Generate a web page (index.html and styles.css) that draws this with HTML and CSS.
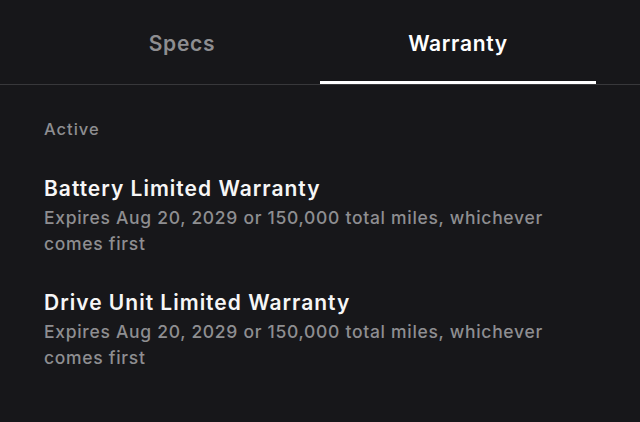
FILE: index.html
```html
<!DOCTYPE html>
<html>
<head>
    <title>Warranty</title>
    <link rel="stylesheet" href="styles.css">
</head>
<body>
    <nav class="tabs">
        <div class="tab">Specs</div>
        <div class="tab active">Warranty</div>
    </nav>
    <div class="content">
        <div class="section-label">Active</div>
        <div class="warranty">
            <h3>Battery Limited Warranty</h3>
            <p>Expires Aug 20, 2029 or 150,000 total miles, whichever comes first</p>
        </div>
        <div class="warranty">
            <h3>Drive Unit Limited Warranty</h3>
            <p>Expires Aug 20, 2029 or 150,000 total miles, whichever comes first</p>
        </div>
    </div>
</body>
</html>
```

FILE: styles.css
```css
/* Aba de garantia, tema escuro */
body {
    margin: 0;
    background-color: #17171a;
    font-family: Inter, 'Noto Sans', sans-serif;
    color: #fff;
}

.tabs {
    display: flex;
    padding: 0 44px;
    border-bottom: 1px solid #38383b;
}

.tab {
    flex: 1;
    text-align: center;
    font-size: 21px;
    font-weight: 600;
    letter-spacing: 0.7px;
    color: #8e8e91;
    height: 84px;
    line-height: 88px;
    box-sizing: border-box;
}

.tab.active {
    color: #fff;
    border-bottom: 3px solid #fff;
}

.content {
    padding: 0 44px;
}

.section-label {
    font-size: 16.5px;
    font-weight: 500;
    letter-spacing: 1px;
    color: #8e8e91;
    margin-top: 34px;
    margin-bottom: 36px;
}

.warranty {
    margin-bottom: 32px;
}

.warranty h3 {
    margin: 0;
    font-size: 21px;
    font-weight: 600;
    letter-spacing: 1px;
    line-height: 28px;
    color: #f6f6f6;
}

.warranty p {
    margin: 2px 0 0;
    font-size: 17.5px;
    font-weight: 500;
    letter-spacing: 0.7px;
    line-height: 26px;
    color: #8e8e91;
    max-width: 530px;
}
```
